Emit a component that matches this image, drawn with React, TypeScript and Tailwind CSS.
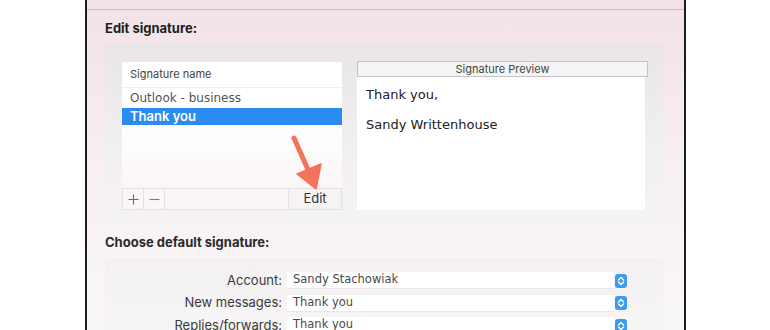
import React from "react";

const ui = { fontFamily: "Inter, 'Noto Sans', sans-serif" };
const wide = { fontFamily: "'DejaVu Sans', Verdana, sans-serif" };

function Stepper() {
  return (
    <span className="flex h-[14px] w-[12px] items-center justify-center rounded-[3px] bg-[#3d9cf0]">
      <svg width="8" height="10" viewBox="0 0 8 10" fill="none" stroke="white" strokeWidth="1.4" strokeLinecap="round" strokeLinejoin="round">
        <path d="M1.5 4 L4 1.6 L6.5 4" />
        <path d="M1.5 6 L4 8.4 L6.5 6" />
      </svg>
    </span>
  );
}

function PopupRow({ label, value }: { label: string; value: string }) {
  return (
    <div className="flex h-[17px] items-center">
      <span className="w-[178px] pr-[1px] text-right text-[13px] text-[#3a3a3a]" style={ui}>
        {label}
      </span>
      <div className="ml-[4px] flex h-full w-[340px] items-center">
        <div className="flex h-full flex-1 items-center border-b border-[#ebe8e9] bg-white pl-[6px] text-[11.5px] text-[#4a4a4a]" style={wide}>
          {value}
        </div>
        <span className="ml-[1px]">
          <Stepper />
        </span>
      </div>
    </div>
  );
}

export default function App() {
  return (
    <div className="h-[330px] w-[770px] overflow-hidden bg-white">
      <div className="ml-[85px] h-full w-[601px] border-x-2 border-[#1c1c1c] bg-gradient-to-b from-[#f2e2e7] via-[#f7eff2] to-[#faf7f8]">
        <div className="h-[10px] border-b border-[#cdbcc2]" />
        <div className="pl-[18px] pr-[21px]">
          <h2 className="mt-[10px] text-[13px] font-bold leading-[16px] text-[#1e1e1e]" style={ui}>
            Edit signature:
          </h2>
          <div className="mt-[8px] flex h-[183px] bg-gradient-to-b from-[#eae6e7] via-[#f1eeef] to-[#f6f3f4] pl-[17px] pt-[18px]">
            <div className="flex h-[148px] w-[220px] flex-col">
              <div className="flex flex-1 flex-col bg-gradient-to-b from-white via-white to-[#fbf5f6]">
                <div className="flex h-[26px] items-center border-b border-[#f0eeee] pl-[8px] text-[11px] text-[#444]" style={ui}>
                  Signature name
                </div>
                <div className="flex h-[20px] items-center pl-[8px] text-[12px] text-[#555]" style={wide}>
                  Outlook - business
                </div>
                <div className="flex h-[17px] items-center bg-[#2a8bf0] pl-[8px] text-[13px] font-semibold text-white" style={ui}>
                  Thank you
                </div>
              </div>
              <div className="flex h-[22px] border border-[#e6dfe1] bg-[#faf6f7]">
                <span className="flex w-[21px] items-center justify-center border-r border-[#e6dfe1]">
                  <svg width="11" height="11" viewBox="0 0 11 11" stroke="#666" strokeWidth="1.1">
                    <path d="M5.5 0.5 V10.5 M0.5 5.5 H10.5" />
                  </svg>
                </span>
                <span className="flex w-[21px] items-center justify-center border-r border-[#e6dfe1]">
                  <svg width="11" height="11" viewBox="0 0 11 11" stroke="#777" strokeWidth="1.1">
                    <path d="M0.5 5.5 H10.5" />
                  </svg>
                </span>
                <span className="flex-1" />
                <span className="flex w-[53px] items-center justify-center border-l border-[#e6dfe1] bg-[#f5f3f3] text-[13px] text-[#333]" style={ui}>
                  Edit
                </span>
              </div>
            </div>
            <div className="ml-[15px] -mt-[1px] flex h-[149px] w-[291px] flex-col">
              <div className="flex h-[16px] items-center justify-center border border-[#c4c2c3] bg-[#f5f4f4] text-[11px] text-[#444]" style={ui}>
                Signature Preview
              </div>
              <div className="mr-[3px] flex-1 bg-white pl-[9px] pt-[10px] text-[13px] leading-[16px] text-[#222]" style={wide}>
                <p>Thank you,</p>
                <p className="mt-[14px]">Sandy Writtenhouse</p>
              </div>
            </div>
          </div>
          <h2 className="mt-[7px] text-[13px] font-bold leading-[16px] text-[#2a2a2a]" style={ui}>
            Choose default signature:
          </h2>
          <div className="mt-[8px] flex h-[80px] flex-col gap-[5.5px] bg-gradient-to-b from-[#f3f0f1] to-[#f7f5f6] pt-[14px]">
            <PopupRow label="Account:" value="Sandy Stachowiak" />
            <PopupRow label="New messages:" value="Thank you" />
            <PopupRow label="Replies/forwards:" value="Thank you" />
          </div>
        </div>
      </div>
      <svg className="absolute left-0 top-0" width="770" height="330" viewBox="0 0 770 330">
        <line x1="294" y1="138" x2="309" y2="172" stroke="#f4735c" strokeWidth="5" strokeLinecap="round" />
        <path d="M297 174 L321 164 L316 189 Z" fill="#f4735c" strokeLinejoin="round" stroke="#f4735c" strokeWidth="1.5" />
      </svg>
    </div>
  );
}
